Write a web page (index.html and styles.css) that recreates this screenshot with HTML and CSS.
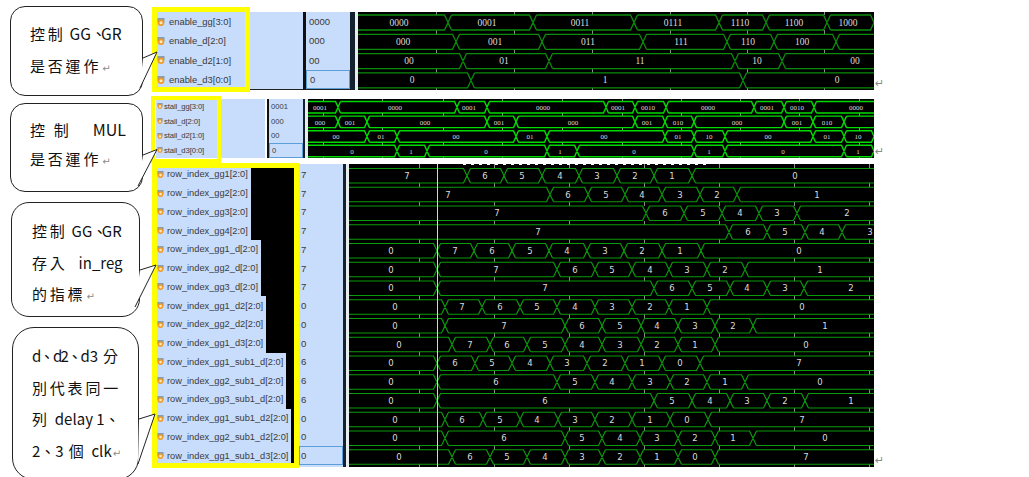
FILE: index.html
```html
<!DOCTYPE html>
<html>

<head>
  <meta charset="UTF-8">
  <title>Waveform notes</title>
  <link rel="stylesheet" href="styles.css">
</head>

<body>
  <svg width="0" height="0" class="defs">
    <symbol id="sig" viewBox="0 0 8 8">
      <rect x="0.5" y="0" width="7" height="4.5" fill="#8b9cab" />
      <circle cx="4" cy="4.7" r="2.4" fill="#f6ecc8" stroke="#ef9a28" stroke-width="1.7" />
    </symbol>
  </svg>

  <aside class="notes">
    <div class="note note-a">
      <p>控制<span class="lat gg">GG<span class="dun">、</span>GR</span></p>
      <p>是否運作<span class="mark">↵</span></p>
    </div>
    <div class="note note-b">
      <p class="spread"><span>控</span><span class="second">制</span><span class="lat mul">MUL</span></p>
      <p>是否運作<span class="mark">↵</span></p>
    </div>
    <div class="note note-c">
      <p>控制<span class="lat gg">GG<span class="dun">、</span>GR</span></p>
      <p>存入<span class="lat reg">in_reg</span></p>
      <p>的指標<span class="mark">↵</span></p>
    </div>
    <div class="note note-d">
      <p><span class="lat"><span class="tight">d、d2、</span>d3</span><span class="word">分</span></p>
      <p>別代表同一</p>
      <p>列<span class="lat word">delay 1、</span></p>
      <p><span class="lat">2、3</span><span class="word">個</span><span class="lat word">clk</span><span class="mark">↵</span></p>
    </div>
  </aside>

  <main class="traces">
    <section class="trace trace-enable">
      <div class="frame"></div>
      <div class="names">
        <div class="row"><span class="name"><svg class="icon"><use href="#sig" /></svg>enable_gg[3:0]</span></div>
        <div class="row"><span class="name"><svg class="icon"><use href="#sig" /></svg>enable_d[2:0]</span></div>
        <div class="row"><span class="name"><svg class="icon"><use href="#sig" /></svg>enable_d2[1:0]</span></div>
        <div class="row"><span class="name"><svg class="icon"><use href="#sig" /></svg>enable_d3[0:0]</span></div>
      </div>
      <div class="values">
        <div class="value">0000</div>
        <div class="value">000</div>
        <div class="value">00</div>
        <div class="value selected">0</div>
      </div>
      <div class="sash"></div>
      <div class="waves" id="wave-enable"></div>
      <span class="mark end-mark">↵</span>
    </section>

    <section class="trace trace-stall">
      <div class="frame"></div>
      <div class="names">
        <div class="row"><span class="name"><svg class="icon"><use href="#sig" /></svg>stall_gg[3:0]</span></div>
        <div class="row"><span class="name"><svg class="icon"><use href="#sig" /></svg>stall_d[2:0]</span></div>
        <div class="row"><span class="name"><svg class="icon"><use href="#sig" /></svg>stall_d2[1:0]</span></div>
        <div class="row"><span class="name"><svg class="icon"><use href="#sig" /></svg>stall_d3[0:0]</span></div>
      </div>
      <div class="values">
        <div class="value">0001</div>
        <div class="value">000</div>
        <div class="value">00</div>
        <div class="value selected">0</div>
      </div>
      <div class="sash"></div>
      <div class="waves" id="wave-stall"></div>
      <span class="mark end-mark">↵</span>
    </section>

    <section class="trace trace-row">
      <div class="frame"></div>
      <div class="names">
        <div class="row"><span class="name"><svg class="icon"><use href="#sig" /></svg>row_index_gg1[2:0]</span></div>
        <div class="row"><span class="name"><svg class="icon"><use href="#sig" /></svg>row_index_gg2[2:0]</span></div>
        <div class="row"><span class="name"><svg class="icon"><use href="#sig" /></svg>row_index_gg3[2:0]</span></div>
        <div class="row"><span class="name"><svg class="icon"><use href="#sig" /></svg>row_index_gg4[2:0]</span></div>
        <div class="row"><span class="name"><svg class="icon"><use href="#sig" /></svg>row_index_gg1_d[2:0]</span></div>
        <div class="row"><span class="name"><svg class="icon"><use href="#sig" /></svg>row_index_gg2_d[2:0]</span></div>
        <div class="row"><span class="name"><svg class="icon"><use href="#sig" /></svg>row_index_gg3_d[2:0]</span></div>
        <div class="row"><span class="name"><svg class="icon"><use href="#sig" /></svg>row_index_gg1_d2[2:0]</span></div>
        <div class="row"><span class="name"><svg class="icon"><use href="#sig" /></svg>row_index_gg2_d2[2:0]</span></div>
        <div class="row"><span class="name"><svg class="icon"><use href="#sig" /></svg>row_index_gg1_d3[2:0]</span></div>
        <div class="row"><span class="name"><svg class="icon"><use href="#sig" /></svg>row_index_gg1_sub1_d[2:0]</span></div>
        <div class="row"><span class="name"><svg class="icon"><use href="#sig" /></svg>row_index_gg2_sub1_d[2:0]</span></div>
        <div class="row"><span class="name"><svg class="icon"><use href="#sig" /></svg>row_index_gg3_sub1_d[2:0]</span></div>
        <div class="row"><span class="name"><svg class="icon"><use href="#sig" /></svg>row_index_gg1_sub1_d2[2:0]</span></div>
        <div class="row"><span class="name"><svg class="icon"><use href="#sig" /></svg>row_index_gg2_sub1_d2[2:0]</span></div>
        <div class="row"><span class="name"><svg class="icon"><use href="#sig" /></svg>row_index_gg1_sub1_d3[2:0]</span></div>
      </div>
      <div class="values">
        <div class="value">7</div>
        <div class="value">7</div>
        <div class="value">7</div>
        <div class="value">7</div>
        <div class="value">7</div>
        <div class="value">7</div>
        <div class="value">7</div>
        <div class="value">0</div>
        <div class="value">0</div>
        <div class="value">0</div>
        <div class="value">6</div>
        <div class="value">6</div>
        <div class="value">6</div>
        <div class="value">0</div>
        <div class="value">0</div>
        <div class="value selected">0</div>
      </div>
      <div class="sash"></div>
      <div class="waves" id="wave-row"></div>
      <span class="mark end-mark">↵</span>
    </section>
  </main>

  <!-- callout pointers, drawn over the notes and the yellow frames -->
  <svg class="tails" viewBox="0 0 1029 477">
    <path d="M143 58 L157 52 L140 88" />
    <path d="M143 155 L157 149.5 L138 186" />
    <path d="M140 270 L156 265 L135 307" />
    <path d="M139 419 L155 414 L138 464" />
  </svg>

  <script src="wave.js"></script>
</body>

</html>
```

FILE: styles.css
```css
* {
  box-sizing: border-box;
}

body {
  width: 1029px;
  height: 477px;
  margin: 0;
  display: flex;
  overflow: hidden;
  position: relative;
  background-color: white;
  font-family: "Liberation Sans", sans-serif;
}

.defs {
  position: absolute;
}

/* callouts on the left */
.notes {
  width: 156px;
  flex-shrink: 0;
  padding-top: 6px;
  font-family: "Noto Sans CJK TC", "Liberation Sans", sans-serif;
  font-size: 15px;
  letter-spacing: 2.8px;
  color: #111;
}

.note {
  border: 1px solid #222;
  background-color: white;
}

.note p {
  margin: 0;
  line-height: 31.5px;
  white-space: nowrap;
}

.note .lat {
  letter-spacing: 0;
}

.note .tight {
  letter-spacing: -1.7px;
}

.note .dun {
  letter-spacing: -5.5px;
}

.note .word {
  margin-left: 5px;
}

.note .gg {
  margin-left: 4px;
  font-size: 15.5px;
}

.note .second {
  margin-left: 6px;
}

.note .mul {
  margin-left: auto;
  font-size: 16px;
}

.note .reg {
  margin-left: 11px;
}

.note .spread {
  display: flex;
}

.note-a {
  width: 133px;
  height: 90px;
  margin-left: 10px;
  padding: 11px 0 0 19px;
  border-radius: 15px;
}

.note-b {
  width: 133px;
  height: 89px;
  margin: 7px 0 0 10px;
  padding: 11px 16px 0 19px;
  border-radius: 15px;
}

.note-b p {
  line-height: 29px;
}

.note-c {
  width: 129px;
  height: 115px;
  margin: 10px 0 0 11px;
  padding: 12px 0 0 20px;
  border-radius: 18px;
}

.note-c .gg {
  font-size: 15px;
}

.note-d {
  width: 127px;
  height: 153px;
  margin: 10px 0 0 12px;
  padding: 12px 0 0 19px;
  border-radius: 22px;
}

.mark {
  color: #8a8a8a;
  font-family: "DejaVu Sans", sans-serif;
  font-size: 10px;
  letter-spacing: 0;
  margin-left: 1px;
}

.tails {
  position: absolute;
  left: 0;
  top: 0;
  width: 1029px;
  height: 477px;
  pointer-events: none;
  z-index: 2;
}

.tails path {
  fill: white;
  stroke: #222;
  stroke-width: 1;
}

/* signal panels */
.traces {
  width: 740px;
  flex-shrink: 0;
}

.trace {
  display: flex;
  position: relative;
}

.frame {
  position: absolute;
  border-style: solid;
  border-color: #ffff00;
  pointer-events: none;
  z-index: 1;
}

.names {
  display: grid;
  background-color: #c8dcfb;
  flex-shrink: 0;
}

.row {
  display: flex;
  min-width: 0;
}

.name {
  display: flex;
  align-items: center;
  white-space: nowrap;
  color: #3a3a3a;
}

.icon {
  flex-shrink: 0;
}

.values {
  display: grid;
  flex-shrink: 0;
  background-color: #c8dcfb;
  color: #3a3a3a;
}

.value {
  display: flex;
  align-items: center;
}

.value.selected {
  border: 1px solid #5a9fd8;
}

.sash {
  flex-shrink: 0;
  border-left-style: solid;
  border-left-color: #14222e;
  border-right: 3px solid #e8ecef;
}

.waves {
  flex-shrink: 0;
  background-color: black;
}

.waves svg {
  display: block;
  width: 100%;
  height: 100%;
}

.waves text {
  fill: #dcdcdc;
  text-anchor: middle;
  font-family: "Liberation Serif", serif;
}

.waves .tick {
  stroke: #8c8c8c;
  fill: none;
  shape-rendering: crispEdges;
}

.waves .bus {
  fill: none;
}

.waves .cursor {
  stroke: #e6e65a;
  stroke-width: 1;
  shape-rendering: crispEdges;
}

.end-mark {
  align-self: flex-end;
  margin: 0 0 0 1px;
  font-size: 11px;
  line-height: 12px;
}

/* enable_* */
.trace-enable {
  margin-top: 12px;
  height: 78px;
}

.trace-enable .frame {
  left: -4px;
  top: -5px;
  width: 98px;
  height: 85px;
  border-width: 5px;
}

.trace-enable .names {
  width: 147px;
  grid-auto-rows: 19.3px;
  border-bottom: 1px solid #222;
}

.trace-enable .name {
  font-size: 9.4px;
}

.trace-enable .icon {
  width: 8px;
  height: 8px;
  margin: 0 4px 0 1px;
}

.trace-enable .values {
  width: 47px;
  padding-left: 3px;
  grid-auto-rows: 19.3px;
  font-size: 9.5px;
  border-left: 3px solid #111;
  border-bottom: 1px solid #222;
}

.trace-enable .value.selected {
  margin-left: -3px;
  padding-left: 3px;
}

.trace-enable .sash {
  width: 8px;
  border-left-width: 5px;
}

.trace-enable .waves {
  width: 516px;
}

.trace-enable .waves text {
  font-size: 9.5px;
}

.trace-enable .bus {
  stroke: #0b8c0b;
  stroke-width: 1.3;
}

/* stall_* */
.trace-stall {
  margin-top: 9px;
  height: 59px;
}

.trace-stall .frame {
  left: -5px;
  top: -3px;
  width: 70px;
  height: 67px;
  border-width: 4px;
}

.trace-stall .names {
  width: 111px;
  grid-auto-rows: 14.7px;
  border-right: 2px solid white;
}

.trace-stall .name {
  font-size: 7.7px;
  letter-spacing: -0.1px;
}

.trace-stall .icon {
  width: 6px;
  height: 6px;
  margin: 0 1px;
}

.trace-stall .values {
  width: 36px;
  padding-left: 2px;
  grid-auto-rows: 14.7px;
  font-size: 7.6px;
  border-left: 2px solid #111;
}

.trace-stall .value.selected {
  margin-left: -2px;
  padding-left: 2px;
}

.trace-stall .sash {
  width: 5px;
  border-left-width: 2px;
}

.trace-stall .waves {
  width: 566px;
}

.trace-stall .waves text {
  font-size: 7px;
}

.trace-stall .bus {
  stroke: #00dc00;
  stroke-width: 1.4;
}

/* row_index_* */
.trace-row {
  margin-top: 6px;
  height: 303px;
}

.trace-row .frame {
  left: -4px;
  top: -1px;
  width: 147px;
  height: 305px;
  border-width: 5px;
}

.trace-row .names {
  width: 138px;
  grid-auto-rows: 18.75px;
  padding-top: 1px;
  background-color: transparent;
}

.trace-row .row {
  background-color: black;
}

.trace-row .name {
  font-size: 9.25px;
  padding-right: 3px;
  background-color: #c8dcfb;
}

.trace-row .icon {
  width: 7px;
  height: 7px;
  margin: 0 3px 0 1px;
}

.trace-row .values {
  width: 44px;
  margin-left: 5px;
  padding-top: 1px;
  padding-left: 2px;
  grid-auto-rows: 18.75px;
  font-size: 9.6px;
}

.trace-row .value.selected {
  margin-left: -2px;
  padding-left: 1px;
}

.trace-row .sash {
  width: 6px;
  border-left-width: 3px;
}

.trace-row .waves {
  width: 525px;
}

.trace-row .waves text {
  font-family: "DejaVu Sans", sans-serif;
  font-size: 8.5px;
}

.trace-row .bus {
  stroke: #0b9a0b;
  stroke-width: 1.2;
}

.trace-row .edge {
  stroke: white;
  stroke-width: 1;
  stroke-dasharray: 3 5;
}
```

FILE: wave.js
```js
// Waveform data in page coordinates. Each row is [edges, labels],
// where labels are [x, text] pairs placed between the edges.
var enable = {
  id: 'wave-enable', left: 358, top: 12, width: 516, height: 78,
  rowTop: 15, rowStep: 19.3, rowHeight: 15, half: 3.5,
  ticks: [436, 514, 592, 670, 747, 824],
  rows: [
    [[448, 533, 634, 719, 766, 827, 874], [[399, '0000'], [487, '0001'], [580, '0011'], [673, '0111'], [740, '1110'], [794, '1100'], [848, '1000']]],
    [[456, 542, 643, 727, 774, 836], [[403, '000'], [495, '001'], [588, '011'], [681, '111'], [748, '110'], [802, '100']]],
    [[463, 549, 735, 782], [[409, '00'], [504, '01'], [640, '11'], [757, '10'], [855, '00']]],
    [[471, 743], [[412, '0'], [605, '1'], [837, '0']]]
  ]
};

var stall = {
  id: 'wave-stall', left: 308, top: 99, width: 566, height: 59,
  rowTop: 101.5, rowStep: 14.6, rowHeight: 11.5, half: 2.5,
  ticks: [323, 382, 443, 502, 562, 622, 681, 740, 799, 859],
  rows: [
    [[338, 457, 487, 606, 635, 666, 754, 784, 814], [[320, '0001'], [395, '0000'], [469, '0001'], [543, '0000'], [618, '0001'], [648, '0010'], [708, '0000'], [767, '0001'], [797, '0010'], [856, '0000']]],
    [[338, 367, 487, 516, 635, 665, 694, 784, 813, 844], [[320, '000'], [350, '001'], [425, '000'], [499, '001'], [573, '000'], [647, '001'], [678, '010'], [737, '000'], [797, '001'], [827, '010']]],
    [[367, 397, 516, 547, 665, 694, 725, 813, 844, 874], [[336, '00'], [381, '01'], [456, '00'], [530, '01'], [604, '00'], [678, '01'], [709, '10'], [768, '00'], [827, '01'], [858, '10']]],
    [[397, 427, 547, 577, 694, 725, 844, 874], [[352, '0'], [411, '1'], [486, '0'], [560, '1'], [634, '0'], [709, '1'], [783, '0'], [858, '1']]]
  ]
};

var rowIndex = {
  id: 'wave-row', left: 349, top: 165, width: 525, height: 303,
  rowTop: 169.5, rowStep: 18.75, rowHeight: 14.5, half: 3.5,
  ticks: [419, 494, 569, 644, 719, 794, 869],
  cursor: 437,
  edge: [463, 710],
  rows: [
    [[467, 504, 542, 579, 617, 654, 692], [[407, '7'], [485, '6'], [522, '5'], [560, '4'], [597, '3'], [635, '2'], [672, '1'], [795, '0']]],
    [[550, 588, 625, 662, 700, 737], [[448, '7'], [568, '6'], [606, '5'], [642, '4'], [680, '3'], [717, '2'], [817, '1']]],
    [[646, 684, 722, 759, 797], [[497, '7'], [665, '6'], [703, '5'], [740, '4'], [777, '3'], [847, '2']]],
    [[729, 767, 805, 842], [[538, '7'], [748, '6'], [785, '5'], [822, '4'], [870, '3']]],
    [[437, 474, 512, 549, 587, 624, 662, 701], [[391, '0'], [455, '7'], [492, '6'], [530, '5'], [567, '4'], [605, '3'], [642, '2'], [680, '1'], [799, '0']]],
    [[437, 557, 595, 632, 669, 707, 745], [[391, '0'], [496, '7'], [575, '6'], [612, '5'], [650, '4'], [687, '3'], [725, '2'], [820, '1']]],
    [[437, 654, 692, 730, 767, 804], [[391, '0'], [545, '7'], [672, '6'], [710, '5'], [747, '4'], [785, '3'], [851, '2']]],
    [[445, 482, 520, 557, 595, 632, 669, 707], [[395, '0'], [462, '7'], [500, '6'], [537, '5'], [575, '4'], [612, '3'], [650, '2'], [687, '1'], [802, '0']]],
    [[445, 565, 602, 641, 678, 715, 753], [[395, '0'], [504, '7'], [582, '6'], [620, '5'], [657, '4'], [695, '3'], [733, '2'], [825, '1']]],
    [[452, 490, 527, 565, 602, 641, 678, 715], [[399, '0'], [470, '7'], [507, '6'], [545, '5'], [582, '4'], [620, '3'], [657, '2'], [695, '1'], [806, '0']]],
    [[437, 475, 512, 550, 587, 625, 662, 700], [[391, '0'], [455, '6'], [492, '5'], [530, '4'], [567, '3'], [605, '2'], [642, '1'], [680, '0'], [799, '7']]],
    [[437, 557, 595, 632, 670, 707, 745], [[391, '0'], [496, '6'], [575, '5'], [612, '4'], [650, '3'], [687, '2'], [725, '1'], [820, '0']]],
    [[437, 654, 692, 730, 767, 805], [[391, '0'], [545, '6'], [672, '5'], [710, '4'], [747, '3'], [785, '2'], [851, '1']]],
    [[445, 483, 520, 558, 595, 632, 670, 708], [[395, '0'], [462, '6'], [500, '5'], [537, '4'], [575, '3'], [612, '2'], [650, '1'], [687, '0'], [802, '7']]],
    [[445, 565, 602, 640, 678, 715, 753], [[395, '0'], [504, '6'], [582, '5'], [620, '4'], [657, '3'], [695, '2'], [733, '1'], [825, '0']]],
    [[452, 490, 527, 565, 602, 640, 678, 715], [[399, '0'], [470, '6'], [507, '5'], [545, '4'], [582, '3'], [620, '2'], [657, '1'], [695, '0'], [806, '7']]]
  ]
};

function busPath(edges, y1, y2, left, right, half) {
  var top = 'M' + left + ' ' + y1;
  var bottom = 'M' + left + ' ' + y2;
  edges.forEach(function (x) {
    top += ' L' + (x - half) + ' ' + y1 + ' L' + (x + half) + ' ' + y2 + ' M' + (x + half) + ' ' + y1;
    bottom += ' L' + (x - half) + ' ' + y2 + ' L' + (x + half) + ' ' + y1 + ' M' + (x + half) + ' ' + y2;
  });
  return top + ' L' + right + ' ' + y1 + ' ' + bottom + ' L' + right + ' ' + y2;
}

function drawPanel(p) {
  var right = p.left + p.width;
  var bottom = p.top + p.height;
  var html = '<svg viewBox="' + p.left + ' ' + p.top + ' ' + p.width + ' ' + p.height + '">';

  p.rows.forEach(function (row, i) {
    var y1 = p.rowTop + p.rowStep * i;
    var y2 = y1 + p.rowHeight;
    var gapEnd = i === p.rows.length - 1 ? bottom : y2 + (p.rowStep - p.rowHeight);

    if (i === 0) {
      html += '<path class="tick" d="' + p.ticks.map(function (x) {
        return 'M' + x + ' ' + p.top + ' V' + y1;
      }).join(' ') + '" />';
    }
    html += '<path class="tick" d="' + p.ticks.map(function (x) {
      return 'M' + x + ' ' + y2 + ' V' + gapEnd;
    }).join(' ') + '" />';

    html += '<path class="bus" d="' + busPath(row[0], y1, y2, p.left, right, p.half) + '" />';
    row[1].forEach(function (label) {
      html += '<text x="' + label[0] + '" y="' + (y2 - p.rowHeight / 2 + 3) + '">' + label[1] + '</text>';
    });
  });

  if (p.edge) {
    html += '<line class="edge" x1="' + p.edge[0] + '" y1="165.5" x2="' + p.edge[1] + '" y2="165.5" />';
  }
  if (p.cursor) {
    html += '<line class="cursor" x1="' + p.cursor + '" y1="' + p.top + '" x2="' + p.cursor + '" y2="' + bottom + '" />';
  }

  document.getElementById(p.id).innerHTML = html + '</svg>';
}

[enable, stall, rowIndex].forEach(drawPanel);
```
